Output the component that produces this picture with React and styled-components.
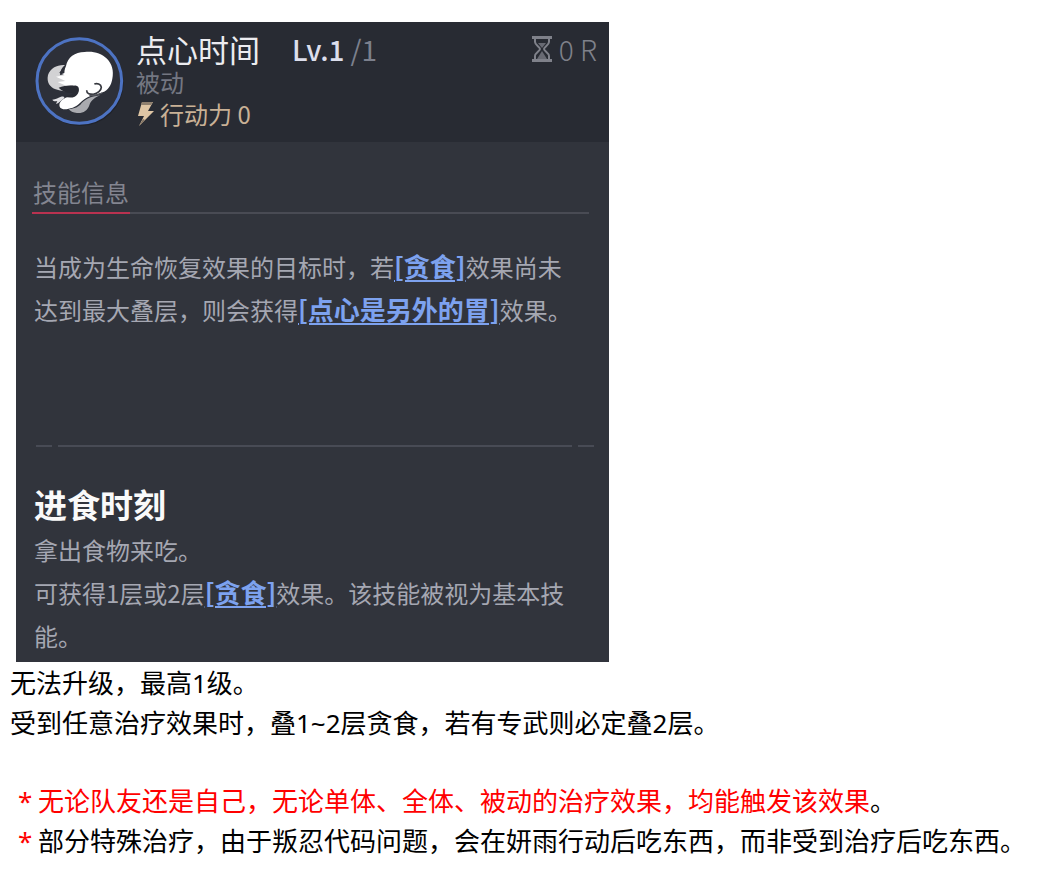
import React from 'react';
import styled, { createGlobalStyle } from 'styled-components';

const GlobalStyle = createGlobalStyle`
	* {
		box-sizing: border-box;
	}
	body {
		margin: 0;
		background-color: #fff;
	}
	h1, h2, h3, p {
		margin: 0;
		font-weight: 400;
	}
`;

const PageContainer = styled.main`
	padding: 22px 10px 10px;
	font-family: 'Noto Sans CJK SC', sans-serif;
`;

const SkillCard = styled.section`
	width: 100%;
	max-width: 593px;
	margin-left: 6px;
	background-color: #31343c;
	color: #a5a7b2;
	font-size: 24px;
	line-height: 43px;
`;

const CardHeader = styled.header`
	display: flex;
	align-items: center;
	gap: 11px;
	padding: 10px 12px 12px 19px;
	background-color: #282b33;
	line-height: 32px;
`;

const SkillIcon = styled.svg`
	flex: none;
	width: 90px;
	height: 90px;
`;

const HeaderText = styled.div`
	flex: 1;
`;

const TitleRow = styled.div`
	display: flex;
	align-items: center;
	height: 34px;
`;

const SkillName = styled.h1`
	color: #ececf0;
	font-size: 31px;
`;

const Level = styled.span`
	margin-left: 32px;
	color: #7c808d;
	font-size: 28px;
	b {
		margin-right: 6px;
		color: #dcdeec;
		font-weight: 500;
	}
`;

const Cooldown = styled.span`
	display: flex;
	align-items: center;
	gap: 7px;
	margin-left: auto;
	color: #7f818a;
	font-size: 28px;
	font-weight: 300;
`;

const SkillType = styled.p`
	color: #747782;
`;

const ActionCost = styled.p`
	display: flex;
	align-items: center;
	gap: 4px;
	color: #c9b196;
`;

const CardBody = styled.div`
	padding: 34px 15px 5px 16px;
`;

const SectionBar = styled.div`
	display: flex;
	margin-right: 5px;
	border-bottom: 2px solid #494b54;
`;

const SectionTitle = styled.h2`
	margin-bottom: -2px;
	padding: 0 1px 4px;
	border-bottom: 2px solid #b93250;
	color: #838590;
	font-size: 24px;
	line-height: 32px;
`;

const Description = styled.p`
	padding: 0 13px 0 2px;
`;

const MainDescription = styled(Description)`
	min-height: 231px;
	padding-top: 31px;
`;

const Keyword = styled.a`
	color: #7da2ef;
	font-size: 26px;
	font-weight: 700;
	line-height: 1;
	text-decoration: underline;
	text-decoration-thickness: 2px;
	text-underline-offset: 3px;
`;

const Divider = styled.div`
	display: grid;
	grid-template-columns: 16px 1fr 16px;
	gap: 6px;
	padding-left: 4px;
	span {
		height: 2px;
		background-color: #484b55;
	}
`;

const EffectName = styled.h3`
	padding: 34px 2px 1px;
	color: #fafafa;
	font-size: 33px;
	font-weight: 700;
	line-height: 46px;
`;

const Notes = styled.section`
	padding-top: 1px;
	color: #000;
	font-family: 'Noto Sans', 'Noto Sans CJK SC', sans-serif;
	font-size: 26px;
	line-height: 40px;
`;

const NoteList = styled.div`
	margin-top: 38px;
	padding-left: 8px;
`;

const Note = styled.p`
	display: flex;
	gap: 6px;
`;

const RedText = styled.span`
	color: #ff0000;
`;

const Star = styled(RedText)`
	flex: none;
	width: 14px;
	text-align: center;
`;

function SkullIcon() {
	return (
		<SkillIcon viewBox="15 15 270 270" aria-hidden="true">
			<circle cx="151" cy="155" r="130" fill="#202229" />
			<circle cx="148" cy="150" r="127" fill="#2d3039" stroke="#4d73c3" strokeWidth="9" />
			<path
				d="M105 102 C83 100 61 111 54 132 C49 154 60 169 77 175 C94 181 115 182 126 181 L108 174 C121 173 130 169 135 163 L110 160 L124 151 L105 145 L123 137 L102 130 L90 132 C90 119 96 109 105 102Z"
				fill="#d2d2d4"
			/>
			<path
				d="M108 105 C113 79 134 64 164 63 C188 59 215 67 231 83 C246 98 252 120 247 143 C244 162 235 177 218 184 C207 189 195 191 183 194 C168 199 159 207 149 217 C139 228 119 235 104 235 C92 235 86 228 89 217 C96 204 110 196 128 196 C143 190 149 178 145 168 C137 161 121 163 108 164 L83 153 L106 150 L78 137 L104 133 L92 127 C100 122 105 115 108 105Z"
				fill="#fff"
			/>
			<path d="M88 125 L105 105 L103 126 L94 130Z" fill="#2d3039" />
			<path
				d="M86 170 C104 163 132 160 142 168 C150 175 147 190 134 197 C124 202 112 199 100 197 C115 195 127 191 129 186 C112 187 98 182 86 170Z"
				fill="#292b33"
			/>
			<path
				d="M67 206 C77 204 86 200 93 197 C101 195 106 197 101 203 C90 210 87 216 78 219 L82 210 C76 212 70 211 67 206Z"
				fill="#e2e2e5"
			/>
			<path
				d="M155 216 C171 201 187 196 211 193 C191 201 182 210 178 223 C173 240 157 248 141 246 C129 246 121 240 116 235 C133 233 147 228 155 216Z"
				fill="#a9aaaf"
			/>
			<path
				d="M170 178 C170 190 180 190 190 190 C203 187 214 178 214 169 C213 159 201 156 193 159"
				fill="none"
				stroke="#35373e"
				strokeWidth="5"
			/>
			<path d="M178 193 C193 195 204 192 216 186" fill="none" stroke="#54565d" strokeWidth="4" />
		</SkillIcon>
	);
}

function HourglassIcon() {
	return (
		<svg width="20" height="26" viewBox="0 0 20 26" fill="none" aria-hidden="true">
			<path d="M0 1.5H20M0 24.5H20" stroke="#7f818a" strokeWidth="3" />
			<path d="M3 3V6C3 9 8 11 8 13C8 15 3 17 3 20V23M17 3V6C17 9 12 11 12 13C12 15 17 17 17 20V23" stroke="#7f818a" strokeWidth="2" />
			<path d="M6 7H14L10 12ZM10 15L15 23H5Z" fill="#686a73" />
		</svg>
	);
}

function BoltIcon() {
	return (
		<svg width="20" height="26" viewBox="0 0 20 26" aria-hidden="true">
			<path d="M6 1H17L12 10H18L3 25L8 15H2Z" fill="#dfc6a5" />
			<path d="M6 1H17L15 4H5Z" fill="#8f806f" />
			<path d="M7 18L3 25L9 19Z" fill="#817363" />
		</svg>
	);
}

function App() {
	return (
		<PageContainer>
			<GlobalStyle />
			<SkillCard>
				<CardHeader>
					<SkullIcon />
					<HeaderText>
						<TitleRow>
							<SkillName>点心时间</SkillName>
							<Level>
								<b>Lv.1</b>/1
							</Level>
							<Cooldown>
								<HourglassIcon />0 R
							</Cooldown>
						</TitleRow>
						<SkillType>被动</SkillType>
						<ActionCost>
							<BoltIcon />
							行动力 0
						</ActionCost>
					</HeaderText>
				</CardHeader>
				<CardBody>
					<SectionBar>
						<SectionTitle>技能信息</SectionTitle>
					</SectionBar>
					<MainDescription>
						当成为生命恢复效果的目标时，若<Keyword href="#gluttony">[贪食]</Keyword>
						效果尚未达到最大叠层，则会获得<Keyword href="#snack">[点心是另外的胃]</Keyword>效果。
					</MainDescription>
					<Divider>
						<span />
						<span />
						<span />
					</Divider>
					<EffectName>进食时刻</EffectName>
					<Description>拿出食物来吃。</Description>
					<Description>
						可获得1层或2层<Keyword href="#gluttony">[贪食]</Keyword>效果。该技能被视为基本技能。
					</Description>
				</CardBody>
			</SkillCard>
			<Notes>
				<p>无法升级，最高1级。</p>
				<p>受到任意治疗效果时，叠1~2层贪食，若有专武则必定叠2层。</p>
				<NoteList>
					<Note>
						<Star>*</Star>
						<span>
							<RedText>无论队友还是自己，无论单体、全体、被动的治疗效果，均能触发该效果</RedText>。
						</span>
					</Note>
					<Note>
						<Star>*</Star>
						<span>部分特殊治疗，由于叛忍代码问题，会在妍雨行动后吃东西，而非受到治疗后吃东西。</span>
					</Note>
				</NoteList>
			</Notes>
		</PageContainer>
	);
}

export default App;
